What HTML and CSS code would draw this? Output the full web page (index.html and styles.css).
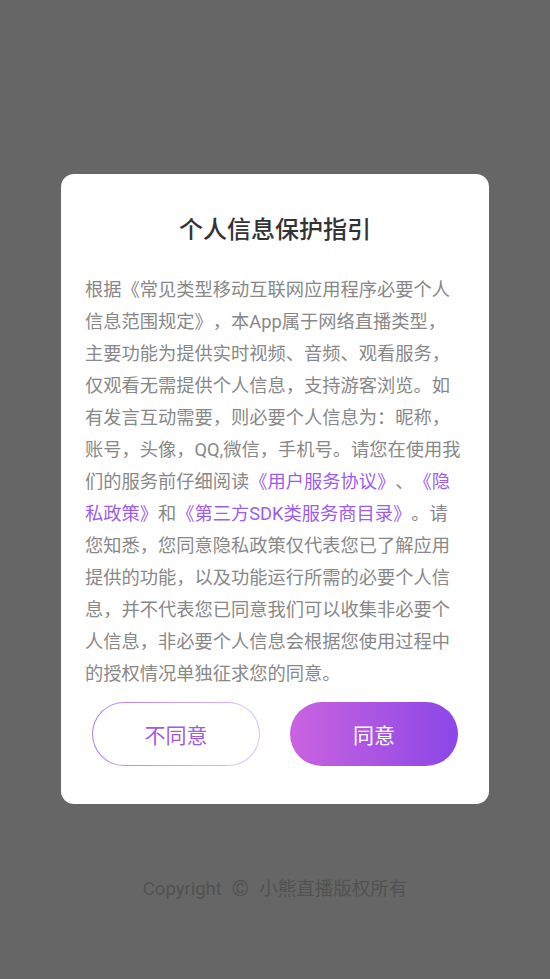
FILE: index.html
```html
<!DOCTYPE html>
<html lang="zh-CN">
<head>
<meta charset="utf-8">
<title>个人信息保护指引</title>
<link rel="stylesheet" href="styles.css">
</head>
<body>
<div class="page">
  <div class="modal">
    <h1 class="title">个人信息保护指引</h1>
    <p class="content">根据《常见类型移动互联网应用程序必要个人<br>信息范围规定》，本App属于网络直播类型，<br>主要功能为提供实时视频、音频、观看服务，<br>仅观看无需提供个人信息，支持游客浏览。如<br>有发言互动需要，则必要个人信息为：昵称，<br>账号，头像，QQ,微信，手机号。请您在使用我<br>们的服务前仔细阅读<a class="link">《用户服务协议》</a>、<a class="link">《隐<br>私政策》</a>和<a class="link">《第三方SDK类服务商目录》</a>。请<br>您知悉，您同意隐私政策仅代表您已了解应用<br>提供的功能，以及功能运行所需的必要个人信<br>息，并不代表您已同意我们可以收集非必要个<br>人信息，非必要个人信息会根据您使用过程中<br>的授权情况单独征求您的同意。</p>
    <div class="actions">
      <button class="btn btn-disagree">不同意</button>
      <button class="btn btn-agree">同意</button>
    </div>
  </div>
  <div class="copyright">Copyright <span class="copy-mark">©</span> 小熊直播版权所有</div>
</div>
</body>
</html>
```

FILE: styles.css
```css
html, body {
  margin: 0;
  padding: 0;
}
body {
  background: #666666;
  font-family: Roboto, "Noto Sans CJK SC", sans-serif;
  text-spacing-trim: space-all;
}
.page {
  min-height: 979px;
  box-sizing: border-box;
  padding-top: 174px;
  display: flex;
  flex-direction: column;
  align-items: center;
}
.modal {
  width: 428px;
  box-sizing: border-box;
  background: #ffffff;
  border-radius: 13px;
  padding: 40px 24px 38px;
}
.title {
  margin: 0;
  text-align: center;
  font-size: 24px;
  line-height: 32px;
  font-weight: 500;
  color: #333333;
}
.content {
  margin: 28px 0 0;
  font-size: 18.25px;
  line-height: 32px;
  color: #888888;
  white-space: nowrap;
  text-spacing-trim: space-all;
}
.link {
  color: #9d5cf0;
  text-decoration: none;
}
.actions {
  margin-top: 12px;
  display: flex;
  justify-content: space-between;
  padding: 0 7px;
}
.btn {
  width: 168px;
  height: 64px;
  border-radius: 32px;
  font-family: Roboto, "Noto Sans CJK SC", sans-serif;
  font-size: 21px;
  padding: 0;
  cursor: pointer;
}
.btn-disagree {
  color: #a05ae8;
  border: 1px solid transparent;
  background: linear-gradient(#fff, #fff) padding-box,
              linear-gradient(100deg, #b27af2, #dcc6fa) border-box;
}
.btn-agree {
  color: #ffffff;
  border: none;
  background: linear-gradient(90deg, #c963e0, #8b47e7);
}
.copyright {
  margin-top: 72px;
  font-size: 18.5px;
  line-height: 26px;
  color: #525252;
  display: flex;
  align-items: center;
  gap: 6px;
}
.copy-mark {
  font-size: 22px;
  margin: 0 4px;
}
```
